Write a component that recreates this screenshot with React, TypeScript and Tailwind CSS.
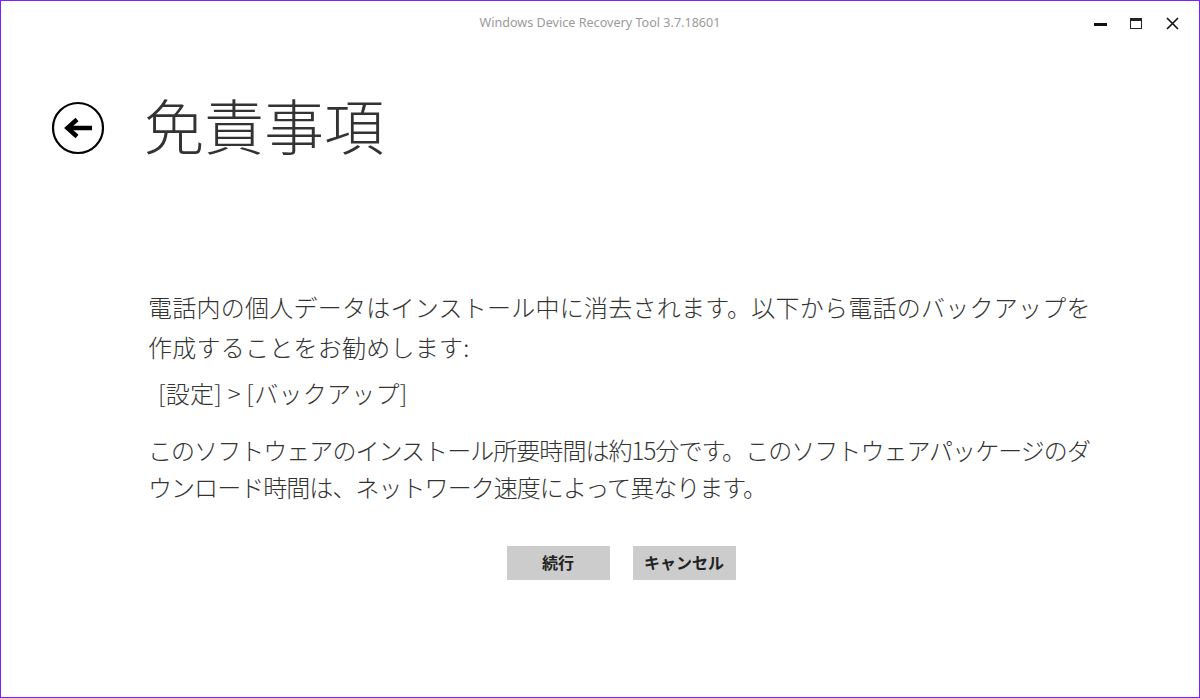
import React from 'react';

const jp = { fontFamily: '"Noto Sans CJK JP", "Noto Sans", sans-serif' };

const BackIcon = () => (
    <svg width="54" height="54" viewBox="0 0 54 54" fill="none">
        <circle cx="27" cy="27" r="25" stroke="#000" strokeWidth="2.2" />
        <path d="M41 27H18" stroke="#000" strokeWidth="4.5" />
        <path d="M26 18.5L16.5 27L26 35.5" stroke="#000" strokeWidth="4.5" strokeLinejoin="miter" />
    </svg>
);

const TitleBar = () => (
    <div className="relative flex h-[44px] items-center justify-center">
        <span className="text-[12.6px] text-[#9a9a9a] font-['Noto_Sans','Open_Sans',sans-serif]">
            Windows Device Recovery Tool 3.7.18601
        </span>
        <div className="absolute right-0 top-0 flex h-[44px] items-center">
            {/* minimize */}
            <div className="flex h-[44px] w-[36px] items-center justify-center">
                <div className="mt-[2px] h-[3px] w-[13px] bg-[#111]" />
            </div>
            {/* maximize */}
            <div className="flex h-[44px] w-[36px] items-center justify-center">
                <div className="h-[11px] w-[12px] border border-t-[3px] border-[#222]" />
            </div>
            {/* close */}
            <div className="mr-[9px] flex h-[44px] w-[36px] items-center justify-center">
                <svg width="13" height="13" viewBox="0 0 13 13">
                    <path d="M1 1L12 12M12 1L1 12" stroke="#111" strokeWidth="1.6" />
                </svg>
            </div>
        </div>
    </div>
);

export default function App() {
    return (
        <div className="h-[698px] w-[1200px] overflow-hidden border border-[#7d1fff] bg-white" style={jp}>
            <TitleBar />

            {/* Header */}
            <div className="mt-[56px] flex items-center">
                <div className="ml-[50px]">
                    <BackIcon />
                </div>
                <h1 className="ml-[39px] -mt-[8px] text-[60px] font-light leading-[60px] text-[#333]">
                    免責事項
                </h1>
            </div>

            {/* Body */}
            <div className="ml-[147px] mt-[132px] w-[946px] whitespace-nowrap text-[24px] font-light leading-[40px] text-[#333]">
                <p className="tracking-[0.25px]">
                    電話内の個人データはインストール中に消去されます。以下から電話のバックアップを
                    <br />
                    作成することをお勧めします:
                </p>
                <p className="ml-[10px] mt-[6px] tracking-[0.25px]">[設定] &gt; [バックアップ]</p>
                <p className="mt-[18px] leading-[37px] tracking-[-0.95px]">
                    このソフトウェアのインストール所要時間は約15分です。このソフトウェアパッケージのダ
                    <br />
                    ウンロード時間は、ネットワーク速度によって異なります。
                </p>

                <div className="mt-[41px] flex justify-center gap-[23px]">
                    <button className="flex h-[34px] w-[103px] items-center justify-center bg-[#cccccc] pb-[3px] text-[16px] font-bold leading-none text-[#222]">
                        続行
                    </button>
                    <button className="flex h-[34px] w-[103px] items-center justify-center bg-[#cccccc] pb-[3px] text-[16px] font-bold leading-none text-[#222]">
                        キャンセル
                    </button>
                </div>
            </div>
        </div>
    );
}
